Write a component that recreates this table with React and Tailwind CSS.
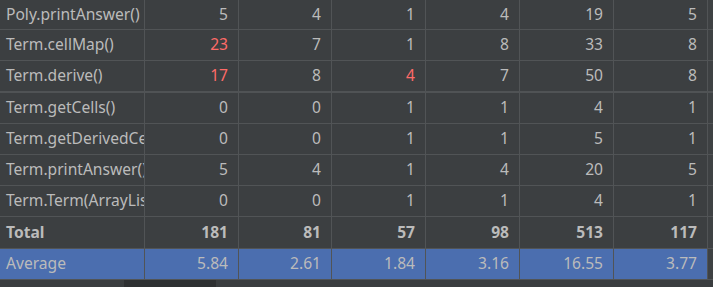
import React from "react";

const rows = [
  ["Poly.printAnswer()", [5, 4, 1, 4, 19, 5], []],
  ["Term.cellMap()", [23, 7, 1, 8, 33, 8], [0]],
  ["Term.derive()", [17, 8, 4, 7, 50, 8], [0, 2]],
  ["Term.getCells()", [0, 0, 1, 1, 4, 1], []],
  ["Term.getDerivedCells()", [0, 0, 1, 1, 5, 1], []],
  ["Term.printAnswer()", [5, 4, 1, 4, 20, 5], []],
  ["Term.Term(ArrayList)", [0, 0, 1, 1, 4, 1], []],
];

const widths = ["w-[145px]", "w-[94px]", "w-[93px]", "w-[94px]", "w-[94px]", "w-[94px]", "w-[94px]"];

function Row({ name, vals, red = [], h, border = "border-b border-[#515456]", bold, avg }) {
  return (
    <div className={`flex ${h} ${border} ${avg ? "bg-[#4b6eaf]" : ""}`}>
      <div
        className={`${widths[0]} shrink-0 border-r border-[#515456] flex items-center pl-[6px] overflow-hidden whitespace-nowrap ${bold ? "font-bold" : ""}`}
      >
        {name}
      </div>
      {vals.map((v, i) => (
        <div
          key={i}
          className={`${widths[i + 1]} shrink-0 border-r border-[#515456] flex items-center justify-end pr-[10px] ${
            red.includes(i) ? "text-[#ff6b68]" : ""
          } ${bold ? "font-bold" : ""}`}
        >
          {v}
        </div>
      ))}
      <div className="flex-1 bg-[#3e4143]" />
    </div>
  );
}

export default function App() {
  return (
    <div
      className="w-[713px] h-[287px] bg-[#3c3f41] text-[#bbbbbb] text-[15.6px] overflow-hidden flex flex-col"
      style={{ fontFamily: '"Noto Sans", "Open Sans", sans-serif' }}
    >
      <Row name={rows[0][0]} vals={rows[0][1]} red={rows[0][2]} h="h-[30px]" />
      <Row name={rows[1][0]} vals={rows[1][1]} red={rows[1][2]} h="h-[31px]" />
      <Row name={rows[2][0]} vals={rows[2][1]} red={rows[2][2]} h="h-[32px]" border="border-b-2 border-[#505355]" />
      {rows.slice(3).map((r, i) => (
        <Row key={i} name={r[0]} vals={r[1]} red={r[2]} h="h-[31px]" />
      ))}
      <Row name="Total" vals={[181, 81, 57, 98, 513, 117]} h="h-[32px]" bold />
      <Row
        name="Average"
        vals={["5.84", "2.61", "1.84", "3.16", "16.55", "3.77"]}
        h="h-[31px]"
        avg
      />
      <div className="flex-1 bg-[#3a3d3f] flex">
        <div className="w-[124px]" />
        <div className="w-[92px] bg-[#2e3032]" />
      </div>
    </div>
  );
}
